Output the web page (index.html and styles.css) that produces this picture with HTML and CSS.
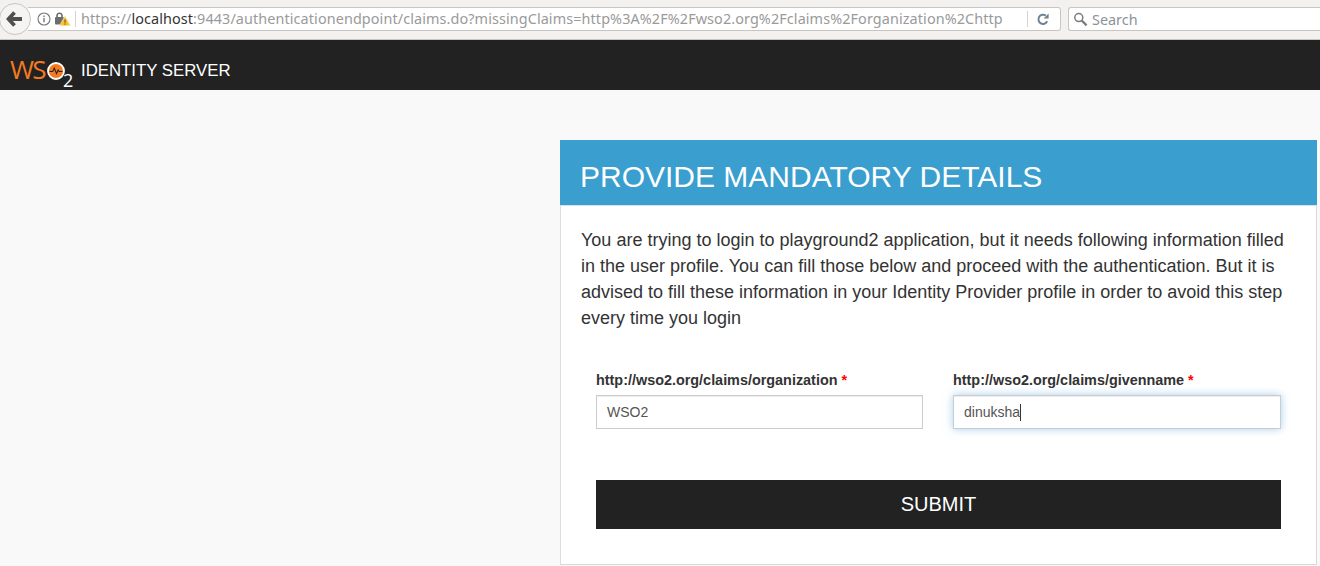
FILE: index.html
```html
<!DOCTYPE html>
<html lang="en">
<head>
<meta charset="utf-8">
<title>Provide mandatory details</title>
<link rel="stylesheet" href="styles.css">
</head>
<body>
<div class="toolbar">
  <div class="back">
    <svg width="18" height="16" viewBox="0 0 18 16"><path d="M8.5 1.5 2.5 8 8.5 14.5M3 8h13" fill="none" stroke="#4f4f4f" stroke-width="3.8"/></svg>
  </div>
  <div class="urlbar">
    <svg class="info" width="14" height="14" viewBox="0 0 14 14"><circle cx="7" cy="7" r="6" fill="none" stroke="#777" stroke-width="1.1"/><path d="M7 6v4.2M7 3.4v1.5" stroke="#777" stroke-width="1.4"/></svg>
    <svg class="lock" width="17" height="15" viewBox="0 0 17 15"><rect x="1" y="5" width="9" height="7.5" rx="1" fill="#6d6d6d"/><path d="M3 6V3.2a2.6 2.6 0 0 1 5 0V6" fill="none" stroke="#6d6d6d" stroke-width="1.6"/><path d="M11 4 16.5 13.8H5.5Z" fill="#fbc02d" stroke="#f2f1ef" stroke-width=".6"/><path d="M11 7.5v3.2M11 11.5v1.2" stroke="#5b4a10" stroke-width="1"/></svg>
    <span class="sep"></span>
    <div class="url"><span class="dim">https://</span><span class="host">localhost</span><span class="dim">:9443/authenticationendpoint/claims.do?missingClaims=http%3A%2F%2Fwso2.org%2Fclaims%2Forganization%2Chttp</span></div>
    <span class="sep sep-end"></span>
    <svg class="reload" width="14" height="14" viewBox="0 0 14 14"><path d="M11.2 9.3A4.6 4.6 0 1 1 9.8 3.6" fill="none" stroke="#6f8290" stroke-width="2"/><path d="M7.6 6.4 12.6 6.4 12.6 1.4Z" fill="#6f8290"/></svg>
  </div>
  <div class="searchbar">
    <svg width="15" height="15" viewBox="0 0 15 15"><circle cx="5.8" cy="5.6" r="4" fill="none" stroke="#7c7c7c" stroke-width="1.5"/><path d="M8.8 8.6 13.6 13.4" stroke="#7c7c7c" stroke-width="2.2"/></svg>
    <span>Search</span>
  </div>
</div>
<header class="navbar">
  <div class="logo">
    <span class="logo-ws">WS</span>
    <span class="logo-o">
      <svg width="18" height="18" viewBox="0 0 18 18"><circle cx="9" cy="9" r="8" fill="#f47b20" stroke="#fff" stroke-width="1.8"/><path d="M2.5 9.5h3.2l1.6-3.4 2.2 5.6 1.6-3.6 1.2 1.4h3" fill="none" stroke="#222" stroke-width="1.1"/></svg>
    </span>
    <span class="logo-two">2</span>
  </div>
  <span class="product">IDENTITY SERVER</span>
</header>
<main class="page">
  <section class="panel">
    <h1 class="panel-title">PROVIDE MANDATORY DETAILS</h1>
    <div class="panel-body">
      <p class="intro">You are trying to login to playground2 application, but it needs following information filled in the user profile. You can fill those below and proceed with the authentication. But it is advised to fill these information in your Identity Provider profile in order to avoid this step every time you login</p>
      <form class="claims">
        <div class="fields">
          <div class="field">
            <label class="label">http://wso2.org/claims/organization <span class="req">*</span></label>
            <div class="input">WSO2</div>
          </div>
          <div class="field">
            <label class="label">http://wso2.org/claims/givenname <span class="req">*</span></label>
            <div class="input input-focus">dinuksha<span class="caret"></span></div>
          </div>
        </div>
        <div class="submit">SUBMIT</div>
      </form>
    </div>
  </section>
</main>
</body>
</html>
```
FILE: styles.css
```css
* { box-sizing: border-box; }
html, body { margin: 0; padding: 0; }
body {
  height: 566px;
  overflow: hidden;
  background: #f9f9f9;
  font-family: "Liberation Sans", Arial, sans-serif;
  color: #333;
}
.toolbar {
  height: 40px;
  background: #f2f1ef;
  border-bottom: 1px solid #c8c6c2;
  display: flex;
  align-items: flex-start;
  padding: 7px 0 0 0;
}
.back {
  width: 32px;
  height: 32px;
  margin-top: -4px;
  margin-left: -1px;
  margin-right: -3px;
  flex: none;
  border: 1px solid #c9c5c0;
  border-radius: 50%;
  background: #f5f4f2;
  display: flex;
  align-items: center;
  justify-content: center;
  position: relative;
  z-index: 1;
}
.urlbar {
  width: 1033px;
  height: 24px;
  flex: none;
  background: #fff;
  border: 1px solid #c9c5c0;
  border-left: 0;
  border-radius: 0 3px 3px 0;
  display: flex;
  align-items: center;
  padding-left: 9px;
}
.info { flex: none; margin-left: 0; }
.lock { flex: none; margin-left: 3px; }
.sep { width: 1px; height: 16px; background: #d5d3d0; flex: none; margin-left: 4px; }
.url {
  width: 946px;
  flex: none;
  margin-left: 5px;
  font-family: "Noto Sans", sans-serif;
  font-size: 14.4px;
  line-height: 20px;
  white-space: nowrap;
  overflow: hidden;
  letter-spacing: 0.1px;
}
.dim { color: #9a9a9a; }
.host { color: #333; }
.sep-end { margin-left: 0; }
.reload { flex: none; margin-left: 8px; }
.searchbar {
  flex: 1;
  height: 24px;
  margin-left: 7px;
  background: #fff;
  border: 1px solid #c9c5c0;
  border-right: 0;
  border-radius: 3px 0 0 3px;
  display: flex;
  align-items: center;
  gap: 4px;
  padding-left: 4px;
  font-family: "Noto Sans", sans-serif;
  font-size: 14.4px;
  color: #8e9298;
}
.navbar {
  height: 50px;
  background: #222;
  display: flex;
  align-items: flex-start;
  padding: 12px 0 0 10px;
}
.logo {
  width: 71px;
  height: 34px;
  flex: none;
  display: flex;
  align-items: flex-start;
}
.logo-ws {
  flex: none;
  width: 37px;
  font-family: "Open Sans", sans-serif;
  font-weight: 400;
  font-size: 26px;
  line-height: 34px;
  letter-spacing: -1.8px;
  color: #f47b20;
}
.logo-o {
  flex: none;
  display: block;
  margin-top: 10px;
  height: 18px;
}
.logo-two {
  font-family: "Open Sans", sans-serif;
  font-weight: 400;
  font-size: 18px;
  line-height: 20px;
  color: #fff;
  margin: 18px 0 0 -2px;
}
.product {
  font-size: 16.8px;
  line-height: 18px;
  color: #fff;
  margin-top: 10px;
}
.page { padding: 50px 3px 0 560px; }
.panel {
  height: 425px;
  background: #fff;
  border: 1px solid #d9d9d9;
  border-top: 0;
  border-left-color: #dcdcdc;
}
.panel-title {
  margin: 0 -1px 0 -1px;
  height: 66px;
  padding: 19px 0 0 20px;
  background: #3a9ecf;
  border-bottom: 1px solid #dcdfe0;
  color: #fff;
  font-weight: 400;
  font-size: 30px;
  line-height: 36px;
}
.panel-body { padding: 21px 35px 0 20px; }
.intro {
  margin: 0;
  width: 710px;
  font-size: 18px;
  line-height: 26px;
  color: #333;
}
.claims { padding: 0 0 0 15px; }
.fields {
  display: grid;
  grid-template-columns: 327px 328px;
  column-gap: 30px;
  margin-top: 39px;
}
.label {
  display: block;
  font-size: 14.4px;
  font-weight: 700;
  line-height: 20px;
  margin-bottom: 5px;
  color: #333;
}
.req { color: #f00; }
.input {
  height: 34px;
  border: 1px solid #ccc;
  background: #fff;
  padding: 0 10px;
  font-size: 14px;
  line-height: 32px;
  color: #555;
  box-shadow: inset 0 1px 1px rgba(0,0,0,.075);
}
.input-focus {
  box-shadow: inset 0 1px 1px rgba(0,0,0,.075), 0 0 8px rgba(102,175,233,.6);
  display: flex;
  align-items: center;
}
.caret { width: 1px; height: 17px; background: #333; flex: none; }
.submit {
  margin-top: 51px;
  width: 685px;
  height: 49px;
  background: #222;
  color: #fff;
  font-size: 20px;
  line-height: 49px;
  text-align: center;
}
```
